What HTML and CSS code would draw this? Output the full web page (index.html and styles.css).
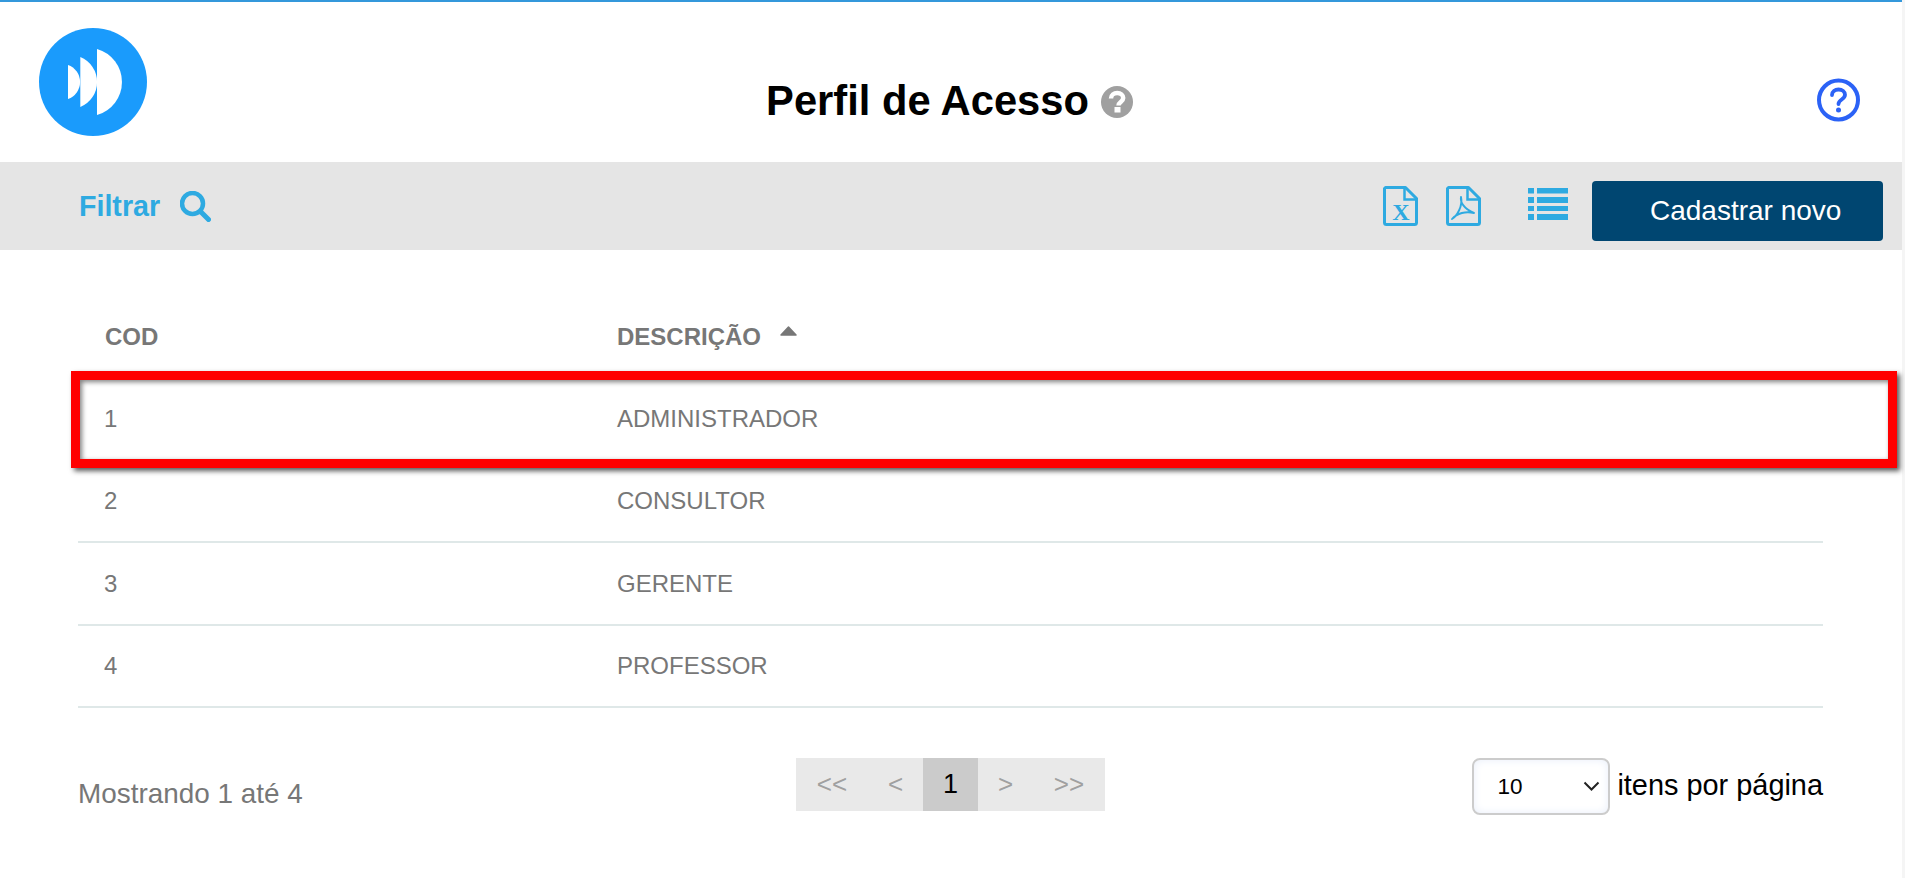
FILE: index.html
```html
<!DOCTYPE html>
<html lang="pt-BR">
<head>
<meta charset="utf-8">
<title>Perfil de Acesso</title>
<link rel="stylesheet" href="styles.css">
</head>
<body>
<div class="page">
  <header class="header">
    <svg class="logo" viewBox="0 0 108 108" aria-label="Logo">
      <circle cx="54" cy="54" r="54" fill="#1a9bfc"/>
      <path d="M29 37A18 18 0 0 1 29 71Z" fill="#fff"/>
      <path d="M41.300 29A27 27 0 0 1 41.300 79Z" fill="#fff"/>
      <path d="M58 21A34.300 34.300 0 0 1 58 87Z" fill="#fff"/>
    </svg>
    <div class="title-wrap">
      <h1 class="title">Perfil de Acesso</h1>
      <svg class="title-help" viewBox="0 0 32 32" aria-hidden="true">
        <circle cx="16" cy="16" r="16" fill="#a0a0a0"/>
        <path d="M10 12.500C10 9 13 7 16.200 7c3.500 0 6 2 6 5 0 4-4.700 4-4.700 7.500" fill="none" stroke="#fff" stroke-width="4.500"/>
        <rect x="13.500" y="21" width="6" height="5.500" fill="#fff"/>
      </svg>
    </div>
    <svg class="help" viewBox="0 0 43 44" aria-label="Ajuda">
      <circle cx="21.500" cy="22" r="19.500" fill="none" stroke="#2b62f6" stroke-width="4"/>
      <path d="M15 17C15 13.500 18 11.500 21.500 11.500c3.700 0 6.500 2 6.500 5.300 0 4.700-6.500 4.700-6.500 9.200" fill="none" stroke="#2b62f6" stroke-width="3.800" stroke-linecap="round"/>
      <circle cx="21.500" cy="32" r="2.500" fill="#2b62f6"/>
    </svg>
  </header>

  <div class="toolbar">
    <div class="filter">
      <span class="filter-label">Filtrar</span>
      <svg class="filter-icon" viewBox="0 0 31 31" aria-hidden="true">
        <circle cx="12.500" cy="12.500" r="10.500" fill="none" stroke="#2eaae1" stroke-width="4.500"/>
        <path d="M20.500 20.500L28.500 28.500" stroke="#2eaae1" stroke-width="5" stroke-linecap="round"/>
      </svg>
    </div>
    <div class="actions">
      <svg class="file-icon" viewBox="0 0 35 40" aria-label="Excel">
        <path d="M2.500 1.500H22.500L33.500 12.500V36.500A2 2 0 0 1 31.500 38.500H3.500A2 2 0 0 1 1.500 36.500V2.500Z" fill="none" stroke="#2eaae1" stroke-width="3" stroke-linejoin="round"/>
        <path d="M21.500 1.500V13.500H33.500" fill="none" stroke="#2eaae1" stroke-width="2.500"/>
        <text class="file-x" x="18" y="33.500" text-anchor="middle">X</text>
      </svg>
      <svg class="file-icon file-pdf" viewBox="0 0 35 40" aria-label="PDF">
        <path d="M2.500 1.500H22.500L33.500 12.500V36.500A2 2 0 0 1 31.500 38.500H3.500A2 2 0 0 1 1.500 36.500V2.500Z" fill="none" stroke="#2eaae1" stroke-width="3" stroke-linejoin="round"/>
        <path d="M21.500 1.500V13.500H33.500" fill="none" stroke="#2eaae1" stroke-width="2.500"/>
        <path d="M15 11C14 16 18 23 28 27C20 25 11 27 6 33C11 30 17 20 15 11Z" fill="none" stroke="#2eaae1" stroke-width="1.900" stroke-linejoin="round"/>
      </svg>
      <svg class="list-icon" viewBox="0 0 40 32" aria-label="Lista">
        <path d="M0 0H6V5.500H0ZM9 0H40V5.500H9ZM0 9H6V15H0ZM9 9H40V15H9ZM0 18H6V23H0ZM9 18H40V23H9ZM0 26H6V32H0ZM9 26H40V32H9Z" fill="#2eaae1"/>
      </svg>
      <button class="primary" type="button">Cadastrar novo</button>
    </div>
  </div>

  <main class="content">
    <div class="table-wrap">
      <table class="table">
        <thead>
          <tr>
            <th class="col-cod">COD</th>
            <th>DESCRIÇÃO<svg class="sort" viewBox="0 0 17 10" aria-hidden="true"><path d="M8.500 1L16 9H1Z" fill="#777" stroke="#777" stroke-width="1.500" stroke-linejoin="round"/></svg></th>
          </tr>
        </thead>
        <tbody>
          <tr class="row-first"><td>1</td><td>ADMINISTRADOR</td></tr>
          <tr><td>2</td><td>CONSULTOR</td></tr>
          <tr><td>3</td><td>GERENTE</td></tr>
          <tr><td>4</td><td>PROFESSOR</td></tr>
        </tbody>
      </table>
      <div class="highlight"></div>
    </div>

    <div class="footer">
      <div class="showing">Mostrando 1 até 4</div>
      <nav class="pager">
        <span class="page-item page-wide">&lt;&lt;</span>
        <span class="page-item page-narrow">&lt;</span>
        <span class="page-item page-active">1</span>
        <span class="page-item page-narrow">&gt;</span>
        <span class="page-item page-wide">&gt;&gt;</span>
      </nav>
      <div class="per-page">
        <div class="select-wrap">
          <select class="select">
            <option>10</option>
            <option>25</option>
            <option>50</option>
          </select>
          <svg class="chevron" viewBox="0 0 17 10" aria-hidden="true">
            <path d="M1.500 1.500L8.500 8.500L15.500 1.500" fill="none" stroke="#222" stroke-width="2"/>
          </svg>
        </div>
        <span class="per-page-label">itens por página</span>
      </div>
    </div>
  </main>
</div>
</body>
</html>
```

FILE: styles.css
```css
* {
  box-sizing: border-box;
}

html,
body {
  margin: 0;
  height: 100%;
  overflow: hidden;
}

body {
  background: #f5f5f5;
  font-family: "Liberation Sans", Arial, sans-serif;
}

.page {
  width: 1902px;
  height: 100%;
  background: #fff;
  border-top: 2px solid #3498db;
}

.header {
  height: 160px;
  display: grid;
  grid-template-columns: 1fr auto 1fr;
  align-items: start;
  padding: 26px 42px 0 39px;
}

.logo {
  width: 108px;
  height: 108px;
  display: block;
}

.title-wrap {
  display: flex;
  align-items: center;
  gap: 12px;
  margin-top: 48px;
  height: 50px;
}

.title {
  margin: 0;
  font-size: 41.700px;
  font-weight: 700;
  line-height: 50px;
  color: #000;
}

.title-help {
  width: 32px;
  height: 32px;
  margin-top: 2px;
}

.help {
  width: 43px;
  height: 44px;
  justify-self: end;
  margin-top: 50px;
}

.toolbar {
  height: 88px;
  background: #e5e5e5;
  display: flex;
  justify-content: space-between;
  align-items: flex-start;
  padding: 21px 19px 0 79px;
}

.filter {
  display: flex;
  align-items: center;
  gap: 20px;
  height: 46px;
}

.filter-label {
  font-size: 28.600px;
  font-weight: 700;
  color: #2eaae1;
}

.filter-icon {
  width: 31px;
  height: 31px;
}

.actions {
  display: flex;
  align-items: flex-start;
  margin-top: -2px;
}

.file-icon {
  width: 35px;
  height: 40px;
  margin-top: 5px;
}

.file-pdf {
  margin-left: 28px;
}

.file-x {
  font-family: "Liberation Serif", serif;
  font-size: 24px;
  font-weight: 700;
  fill: #2eaae1;
}

.list-icon {
  width: 40px;
  height: 32px;
  margin: 7px 24px 0 47px;
}

.primary {
  width: 291px;
  height: 60px;
  border: 0;
  border-radius: 4px;
  background: #004671;
  color: #fff;
  font-family: inherit;
  font-size: 28px;
  text-align: left;
  padding: 0 0 0 58px;
}

.content {
  width: 1745px;
  margin-left: 78px;
  padding-top: 45px;
}

.table-wrap {
  position: relative;
}

.table {
  width: 100%;
  border-collapse: collapse;
  table-layout: fixed;
  color: #777;
  font-size: 24px;
}

.table th {
  height: 82px;
  padding: 2px 0 0 27px;
  text-align: left;
  font-weight: 700;
  font-size: 24px;
}

.table th + th {
  padding-left: 26px;
}

.col-cod {
  width: 513px;
}

.table td {
  height: 82.500px;
  padding: 1px 0 0 26px;
  border-bottom: 2px solid #dfe8e8;
}

.table .row-first td {
  padding-top: 3px;
}

.sort {
  width: 17px;
  height: 10px;
  margin-left: 19px;
  vertical-align: 9px;
}

.highlight {
  position: absolute;
  left: -7px;
  top: 76px;
  width: 1826px;
  height: 97px;
  border: 9px solid #f00;
  box-shadow: 3px 3px 5px rgba(0, 0, 0, 0.65), inset 2px 2px 5px rgba(0, 0, 0, 0.5);
}

.footer {
  display: grid;
  grid-template-columns: 1fr auto 1fr;
  align-items: start;
  padding-top: 50px;
}

.showing {
  font-size: 27.900px;
  color: #777;
  margin-top: 20px;
}

.pager {
  display: flex;
  height: 53px;
  background: #e9e9e9;
  color: #a0a0a0;
  font-size: 26px;
}

.page-item {
  display: flex;
  align-items: center;
  justify-content: center;
}

.page-wide {
  width: 72px;
}

.page-narrow {
  width: 55px;
}

.page-active {
  width: 55px;
  background: #cbcbcb;
  color: #000;
  font-size: 27px;
}

.per-page {
  display: flex;
  align-items: center;
  justify-content: flex-end;
  gap: 7px;
}

.select-wrap {
  position: relative;
}

.select {
  display: block;
  width: 138px;
  height: 57px;
  border: 2px solid #ccc;
  border-radius: 8px;
  background: #fff;
  box-shadow: inset 0 0 9px #e8eefa;
  appearance: none;
  padding: 0 0 0 23px;
  font-family: inherit;
  font-size: 22.500px;
  color: #000;
}

.chevron {
  position: absolute;
  right: 10px;
  top: 23px;
  width: 17px;
  height: 10px;
  pointer-events: none;
}

.per-page-label {
  font-size: 28.900px;
  color: #000;
  margin-top: -3px;
}
```
